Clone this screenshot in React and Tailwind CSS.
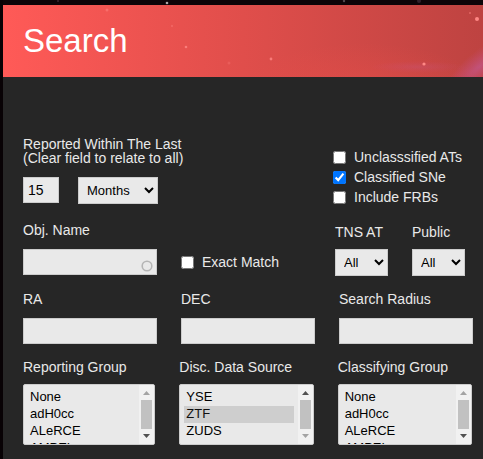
import React from "react";

const field = "block h-[26px] rounded-none border border-[#cccccc] bg-[#e9e9e9] px-1 text-sm text-black outline-none";
const dropdown = "block h-[27px] rounded-none border border-[#cccccc] bg-[#e9e9e9] px-1 text-[13px] text-black outline-none";
const caption = "block text-sm leading-[14px]";

function Header() {
  return (
    <header className="relative flex h-[72px] items-center overflow-hidden bg-linear-to-r from-[#ff5a57] via-[#e04e4b] to-[#be4341] px-5">
      <svg className="absolute right-0 top-0 h-[72px] w-[480px]" viewBox="0 0 480 72" aria-hidden="true">
        <defs>
          <radialGradient id="nebula">
            <stop offset="0" stopColor="#c45a98" stopOpacity="0.8" />
            <stop offset="1" stopColor="#c8508a" stopOpacity="0" />
          </radialGradient>
          <radialGradient id="glow">
            <stop offset="0" stopColor="#f0504a" stopOpacity="0.35" />
            <stop offset="1" stopColor="#f0504a" stopOpacity="0" />
          </radialGradient>
        </defs>
        <ellipse cx="360" cy="82" rx="120" ry="44" fill="url(#glow)" />
        <ellipse cx="476" cy="62" rx="44" ry="15" fill="url(#nebula)" opacity="0.8" transform="rotate(-40 476 62)" />
        <ellipse cx="415" cy="62" rx="48" ry="6" fill="url(#nebula)" opacity="0.3" />
        <g fill="#ff8784">
          <circle cx="474" cy="14" r="2" />
          <circle cx="421" cy="59" r="1.6" />
          <circle cx="268" cy="54" r="1.4" opacity="0.8" />
          <circle cx="183" cy="42" r="1.3" opacity="0.8" />
          <circle cx="104" cy="5" r="1.5" opacity="0.5" />
          <circle cx="169" cy="21" r="1.2" opacity="0.35" />
          <circle cx="226" cy="58" r="1.5" opacity="0.25" />
          <circle cx="467" cy="8" r="1" opacity="0.5" />
        </g>
      </svg>
      <h1 className="relative text-[33px] leading-10 text-white">Search</h1>
    </header>
  );
}

function Check({ label, checked }) {
  return (
    <label className="flex items-center gap-2 text-sm leading-5">
      <input type="checkbox" defaultChecked={checked} className="mt-px size-[13px]" />
      {label}
    </label>
  );
}

function TextField({ label }) {
  return (
    <label className={caption}>
      {label}
      <input type="text" className={`${field} mt-3 w-full`} />
    </label>
  );
}

function YesNo({ label }) {
  return (
    <label className={caption}>
      {label}
      <select className={`${dropdown} mt-[10px] w-[53px]`}>
        <option>All</option>
        <option>Yes</option>
        <option>No</option>
      </select>
    </label>
  );
}

function ListBox({ label, options, selected = [], atEnd = false }) {
  return (
    <label className={caption}>
      {label}
      <span className="mt-[10px] flex h-[61px] overflow-hidden rounded-xs border border-[#cccccc] bg-[#e9e9e9]">
        <select
          multiple
          defaultValue={selected}
          className="h-full min-w-0 flex-1 px-1 py-1 text-[13px] text-black outline-none [scrollbar-width:none]"
        >
          {options.map((name) => (
            <option key={name} value={name} className="h-[17px] min-h-0 px-0.5 py-0 leading-[17px]">
              {name}
            </option>
          ))}
        </select>
        <svg className="h-[59px] w-[15px] shrink-0" viewBox="0 0 15 59" aria-hidden="true">
          <rect width="15" height="59" fill="#f1f1f1" />
          <path d="M4 10h7L7.500 6z" fill={atEnd ? "#505050" : "#a3a3a3"} />
          <rect x="2" y="15" width="11" height="29" fill="#c1c1c1" />
          <path d="M4 49h7L7.500 53z" fill={atEnd ? "#a3a3a3" : "#505050"} />
        </svg>
      </span>
    </label>
  );
}

export default function App() {
  return (
    <div className="flex min-h-screen flex-col bg-[#080205] pl-[3px] font-['Liberation_Sans',Arial,sans-serif] text-[#e9e9e9]">
      <svg className="block h-[5px] w-full" aria-hidden="true">
        <rect width="100%" height="5" fill="#0d0408" />
        <circle cx="164" cy="3" r="1.3" fill="#aaa3a5" />
        <circle cx="341" cy="1" r="1.2" fill="#51484d" />
        <circle cx="55" cy="1" r="1" fill="#3b2530" />
        <circle cx="416" cy="1" r="2" fill="#30202b" />
      </svg>
      <main className="flex-1 bg-[#262626]">
        <Header />
        <form className="pl-5 pr-[10px] pt-[60px]">
          <div className="flex justify-between">
            <div>
              <label htmlFor="period" className={caption}>
                Reported Within The Last
                <br />
                (Clear field to relate to all)
              </label>
              <div className="mt-3 flex gap-[19px]">
                <input id="period" type="text" defaultValue="15" className={`${field} w-9`} />
                <select aria-label="Period units" defaultValue="Months" className={`${dropdown} w-20`}>
                  <option>Days</option>
                  <option>Months</option>
                  <option>Years</option>
                </select>
              </div>
            </div>
            <div className="w-[140px] pt-[10px]">
              <Check label="Unclasssified ATs" />
              <Check label="Classified SNe" checked />
              <Check label="Include FRBs" />
            </div>
          </div>

          <div className="mt-4 flex gap-6">
            <div className="flex-1">
              <label htmlFor="name" className={caption}>Obj. Name</label>
              <div className="relative mt-3">
                <input id="name" type="text" className={`${field} w-full`} />
                <svg className="absolute right-1 top-[11px] size-3" viewBox="0 0 12 12" aria-hidden="true">
                  <circle cx="6" cy="6" r="4.800" fill="none" stroke="#b5b5b5" strokeWidth="1.600" />
                </svg>
              </div>
            </div>
            <div className="flex-1 pt-[29px]">
              <Check label="Exact Match" />
            </div>
            <div className="-ml-1 flex w-[138px] gap-6 pt-0.5">
              <YesNo label="TNS AT" />
              <YesNo label="Public" />
            </div>
          </div>

          <div className="mt-4 grid grid-cols-3 gap-6">
            <TextField label="RA" />
            <TextField label="DEC" />
            <TextField label="Search Radius" />
          </div>

          <div className="mt-4 grid grid-cols-[66fr_67fr_67fr] gap-6 pr-px">
            <ListBox label="Reporting Group" options={["None", "adH0cc", "ALeRCE", "AMPEL"]} />
            <ListBox label="Disc. Data Source" options={["YSE", "ZTF", "ZUDS"]} selected={["ZTF"]} atEnd />
            <ListBox label="Classifying Group" options={["None", "adH0cc", "ALeRCE", "AMPEL"]} />
          </div>
        </form>
      </main>
    </div>
  );
}
